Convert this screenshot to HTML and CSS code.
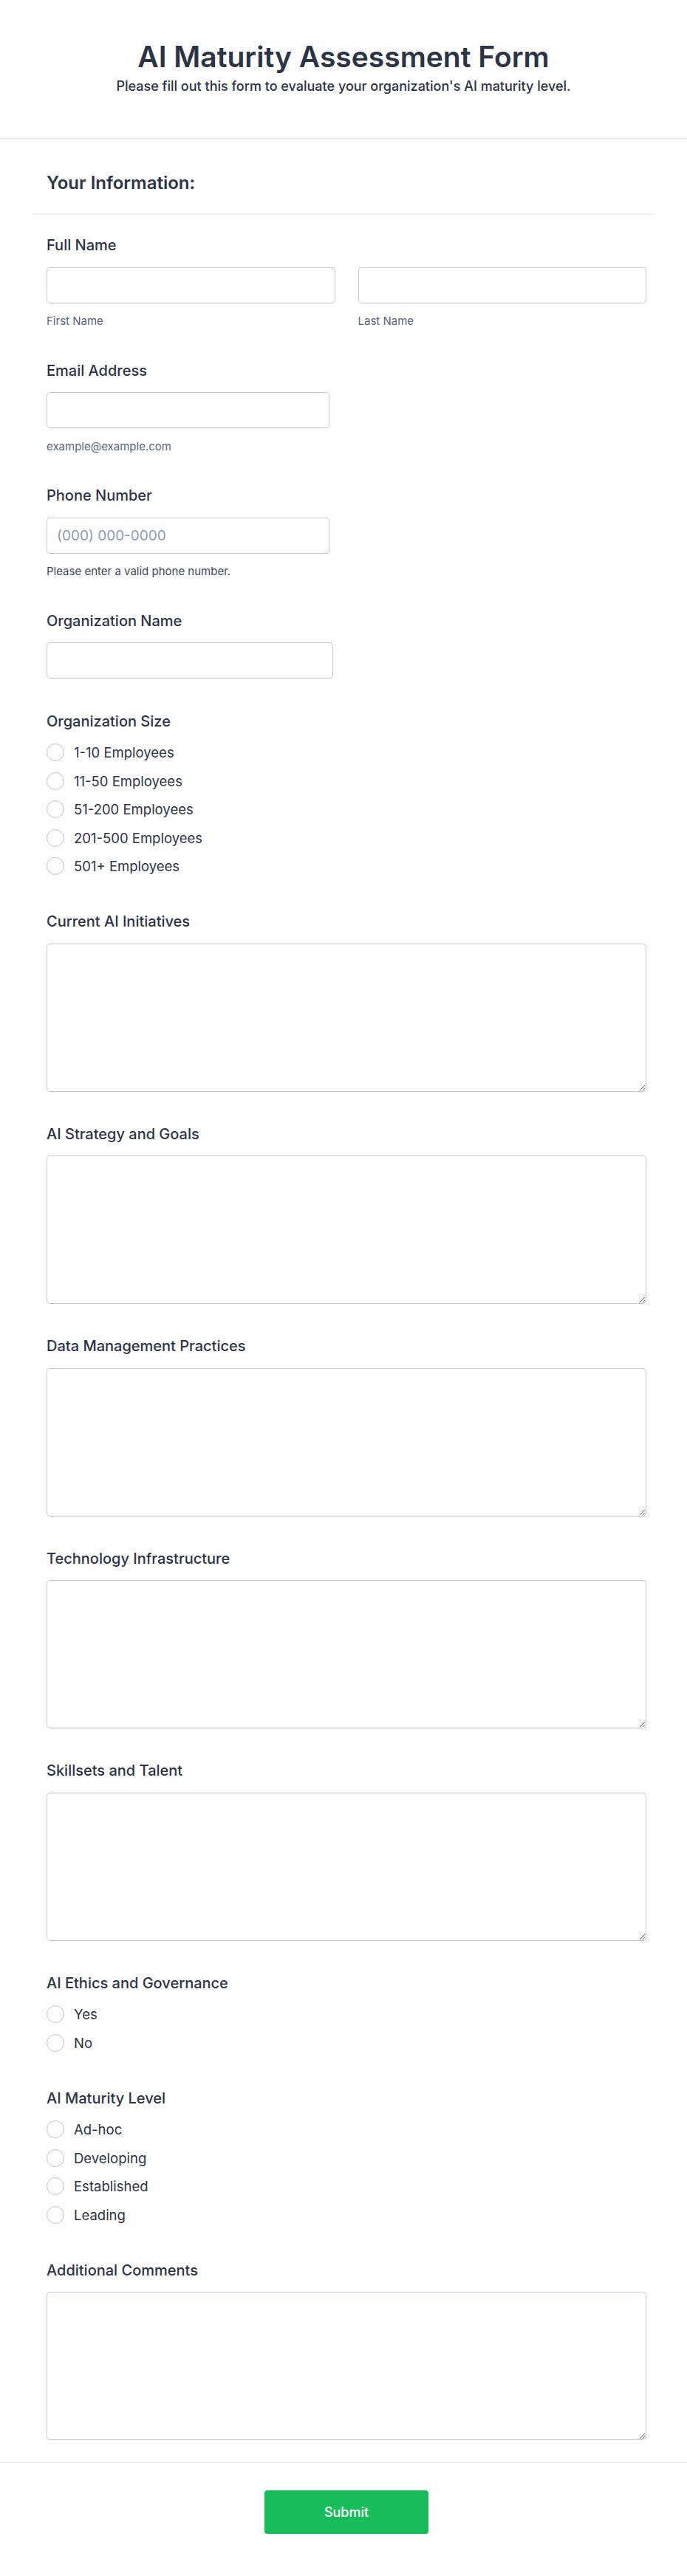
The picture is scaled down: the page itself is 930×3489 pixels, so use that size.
FILE: index.html
```html
<!DOCTYPE html>
<html lang="en">
<head>
<meta charset="utf-8">
<title>AI Maturity Assessment Form</title>
<link rel="stylesheet" href="styles.css">
</head>
<body>
<header class="form-header">
  <h1 class="form-title">AI Maturity Assessment Form</h1>
  <p class="form-subtitle">Please fill out this form to evaluate your organization's AI maturity level.</p>
</header>
<main class="form-body">
  <div class="section-head"><h2 class="section-title">Your Information:</h2></div>
  <div class="fields">
    <div class="field">
      <label class="field-label">Full Name</label>
      <div class="name-row">
        <div class="name-col">
          <input class="text-input" type="text">
          <span class="sublabel">First Name</span>
        </div>
        <div class="name-col">
          <input class="text-input" type="text">
          <span class="sublabel">Last Name</span>
        </div>
      </div>
    </div>
    <div class="field">
      <label class="field-label">Email Address</label>
      <input class="text-input w-email" type="email">
      <span class="sublabel">example@example.com</span>
    </div>
    <div class="field">
      <label class="field-label">Phone Number</label>
      <input class="text-input w-email" type="tel" placeholder="(000) 000-0000">
      <span class="sublabel helper">Please enter a valid phone number.</span>
    </div>
    <div class="field">
      <label class="field-label">Organization Name</label>
      <input class="text-input w-org" type="text">
    </div>
    <div class="field field-radio">
      <label class="field-label">Organization Size</label>
      <div class="radio-list">
        <label class="radio-row"><input class="radio" type="radio" name="size"><span>1-10 Employees</span></label>
        <label class="radio-row"><input class="radio" type="radio" name="size"><span>11-50 Employees</span></label>
        <label class="radio-row"><input class="radio" type="radio" name="size"><span>51-200 Employees</span></label>
        <label class="radio-row"><input class="radio" type="radio" name="size"><span>201-500 Employees</span></label>
        <label class="radio-row"><input class="radio" type="radio" name="size"><span>501+ Employees</span></label>
      </div>
    </div>
    <div class="field field-text">
      <label class="field-label">Current AI Initiatives</label>
      <textarea class="text-area"></textarea>
    </div>
    <div class="field field-text">
      <label class="field-label">AI Strategy and Goals</label>
      <textarea class="text-area"></textarea>
    </div>
    <div class="field field-text">
      <label class="field-label">Data Management Practices</label>
      <textarea class="text-area"></textarea>
    </div>
    <div class="field field-text">
      <label class="field-label">Technology Infrastructure</label>
      <textarea class="text-area"></textarea>
    </div>
    <div class="field field-text">
      <label class="field-label">Skillsets and Talent</label>
      <textarea class="text-area"></textarea>
    </div>
    <div class="field field-radio">
      <label class="field-label">AI Ethics and Governance</label>
      <div class="radio-list">
        <label class="radio-row"><input class="radio" type="radio" name="ethics"><span>Yes</span></label>
        <label class="radio-row"><input class="radio" type="radio" name="ethics"><span>No</span></label>
      </div>
    </div>
    <div class="field field-radio">
      <label class="field-label">AI Maturity Level</label>
      <div class="radio-list">
        <label class="radio-row"><input class="radio" type="radio" name="level"><span>Ad-hoc</span></label>
        <label class="radio-row"><input class="radio" type="radio" name="level"><span>Developing</span></label>
        <label class="radio-row"><input class="radio" type="radio" name="level"><span>Established</span></label>
        <label class="radio-row"><input class="radio" type="radio" name="level"><span>Leading</span></label>
      </div>
    </div>
    <div class="field field-last">
      <label class="field-label">Additional Comments</label>
      <textarea class="text-area"></textarea>
    </div>
  </div>
</main>
<footer class="form-footer">
  <button class="submit-btn" type="button">Submit</button>
</footer>
</body>
</html>
```
FILE: styles.css
```css
* { box-sizing: border-box; }

body {
  margin: 0;
  background: #ffffff;
  font-family: "Inter", "Noto Sans", "Liberation Sans", sans-serif;
  color: #2c3345;
}

.form-header {
  padding: 53px 20px 60px;
  text-align: center;
  border-bottom: 1px solid #e2e5ec;
}

.form-title {
  margin: 0;
  font-size: 39px;
  font-weight: 600;
  line-height: normal;
  color: #2c3345;
}

.form-subtitle {
  margin: 6px 0 0;
  font-size: 18px;
  font-weight: 500;
  line-height: normal;
  color: #2c3345;
}

.section-head {
  margin: 0 46px 0 45px;
  padding: 45px 18px 27px;
  border-bottom: 2px solid #eef0f5;
}

.section-title {
  margin: 0;
  font-size: 24px;
  font-weight: 600;
  line-height: normal;
  color: #2c3345;
}

.fields {
  margin: 0 55px 0 63px;
  padding-top: 29px;
}

.field {
  margin-bottom: 45.5px;
}

.field-text {
  margin-bottom: 45px;
}

.field-radio {
  margin-bottom: 51px;
}

.field-last {
  margin-bottom: 29.5px;
}

.field-label {
  display: block;
  margin-bottom: 17.5px;
  font-size: 20px;
  font-weight: 500;
  line-height: normal;
  color: #2c3345;
}

.name-row {
  display: flex;
  gap: 31px;
}

.name-col {
  flex: 1;
}

.text-input {
  display: block;
  width: 100%;
  height: 49px;
  padding: 0 13px;
  border: 1px solid #c3c9d6;
  border-bottom-color: #b9c0ce;
  border-radius: 5px;
  background: #fff;
  font-family: inherit;
  font-size: 19px;
  color: #2c3345;
}

.text-input::placeholder {
  color: #8e9bb2;
}

.w-email { width: 383px; }
.w-org { width: 388px; }

.sublabel {
  display: block;
  margin-top: 14.5px;
  font-size: 15px;
  line-height: normal;
  color: #57647e;
}

.helper {
  color: #3e485d;
}

.text-area {
  display: block;
  width: 100%;
  height: 201px;
  margin-top: 1.3px;
  padding: 10px 13px;
  border: 1px solid #c3c9d6;
  border-bottom-color: #b9c0ce;
  border-radius: 5px;
  background: #fff;
  font-family: inherit;
  font-size: 18px;
  color: #2c3345;
}

.radio-list {
  display: flex;
  flex-direction: column;
  gap: 14.5px;
  padding-top: 1px;
}

.radio-row {
  display: flex;
  align-items: center;
  gap: 13px;
  height: 24px;
  font-size: 18.5px;
  color: #2c3345;
}

.radio {
  appearance: none;
  -webkit-appearance: none;
  margin: 0;
  width: 24px;
  height: 24px;
  border: 1px solid #bcc3d1;
  border-radius: 50%;
  background: #fff;
  flex: none;
}

.form-footer {
  border-top: 1px solid #e3e6ec;
  padding: 37px 55px 49px 63px;
  display: flex;
  justify-content: center;
}

.submit-btn {
  width: 222px;
  height: 59px;
  border: none;
  border-radius: 4px;
  background: #18bd5b;
  color: #ffffff;
  font-family: inherit;
  font-size: 18px;
  font-weight: 500;
}
```
